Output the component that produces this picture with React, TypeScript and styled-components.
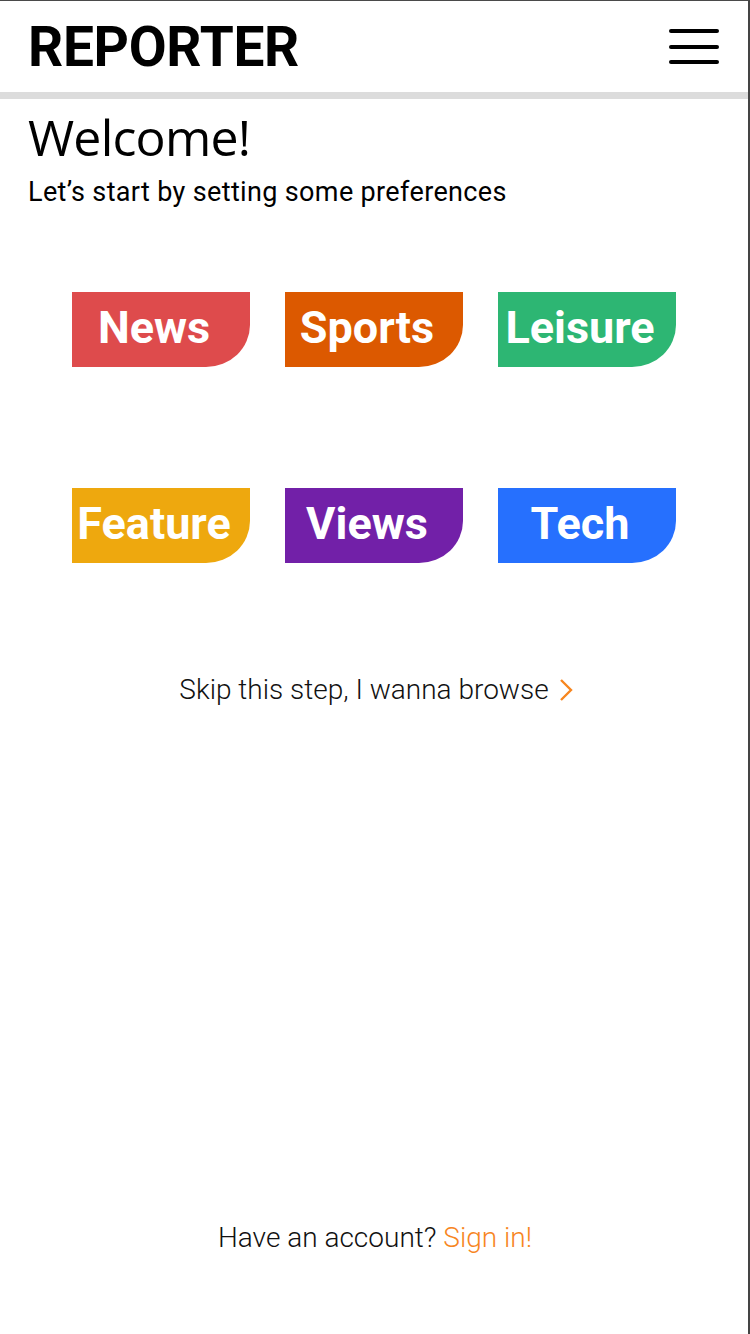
import styled, { createGlobalStyle } from "styled-components";

const GlobalStyle = createGlobalStyle`
  html, body {
    margin: 0;
    padding: 0;
    background: #ffffff;
  }
  * {
    box-sizing: border-box;
  }
`;

const Frame = styled.div`
  width: 750px;
  height: 1334px;
  border-top: 1px solid #4a4a4a;
  border-right: 2px solid #444444;
  display: flex;
  flex-direction: column;
  background: #ffffff;
  overflow: hidden;
`;

const Header = styled.header`
  height: 98px;
  padding: 0 28px 0 28px;
  display: flex;
  align-items: center;
  justify-content: space-between;
  border-bottom: 7px solid #dcdcdc;
`;

const Logo = styled.h1`
  margin: 0;
  font-family: Roboto, "Liberation Sans", sans-serif;
  font-weight: 700;
  font-size: 55px;
  letter-spacing: -0.3px;
  color: #000;
  line-height: 1;
  padding-top: 2px;
`;

const MenuButton = styled.button`
  border: none;
  background: none;
  padding: 0;
  width: 52px;
  margin-right: -1px;
  display: flex;
  flex-direction: column;
  gap: 11.5px;
  cursor: pointer;
`;

const MenuLine = styled.span`
  display: block;
  height: 4px;
  width: 50px;
  border-radius: 2px;
  background: #000;
`;

const Intro = styled.section`
  padding: 8px 28px 0;
`;

const Title = styled.h2`
  margin: 0;
  font-family: "Open Sans", "Noto Sans", sans-serif;
  font-weight: 400;
  font-size: 50px;
  letter-spacing: -0.8px;
  line-height: 60px;
  color: #000;
`;

const Subtitle = styled.p`
  margin: 9px 0 0;
  font-family: Roboto, "Liberation Sans", sans-serif;
  font-size: 27px;
  letter-spacing: 0.35px;
  line-height: 32px;
  color: #000;
`;

const TagGrid = styled.div`
  margin-top: 84px;
  display: grid;
  grid-template-columns: repeat(3, 178px);
  column-gap: 35px;
  row-gap: 121px;
  justify-content: center;
`;

const Tag = styled.button<{ $color: string }>`
  height: 75px;
  border: none;
  background: ${(p) => p.$color};
  border-bottom-right-radius: 44px 42px;
  padding: 0 14px 5px 0;
  display: flex;
  align-items: center;
  justify-content: center;
  font-family: Roboto, "Liberation Sans", sans-serif;
  font-weight: 700;
  font-size: 45px;
  color: #ffffff;
  cursor: pointer;
`;

const SkipLink = styled.a`
  margin-top: 110px;
  align-self: center;
  display: flex;
  align-items: center;
  gap: 10px;
  font-family: Roboto, "Liberation Sans", sans-serif;
  font-weight: 300;
  font-size: 28px;
  color: #111;
  text-decoration: none;
  padding-left: 4px;
`;

const Footer = styled.footer`
  margin-top: auto;
  padding-bottom: 80px;
  text-align: center;
  font-family: Roboto, "Liberation Sans", sans-serif;
  font-weight: 300;
  font-size: 28px;
  color: #111;
  padding-left: 2px;
`;

const Accent = styled.a`
  color: #f7861f;
  text-decoration: none;
`;

const tags = [
  { label: "News", color: "#de4b4c" },
  { label: "Sports", color: "#dc5900" },
  { label: "Leisure", color: "#2db673" },
  { label: "Feature", color: "#eea80e" },
  { label: "Views", color: "#7220a8" },
  { label: "Tech", color: "#2670fe" },
];

function Chevron() {
  return (
    <svg width="14" height="24" viewBox="0 0 14 24" fill="none">
      <path d="M2 2 L12 12 L2 22" stroke="#f7861f" strokeWidth="2.4" />
    </svg>
  );
}

export default function App() {
  return (
    <>
      <GlobalStyle />
      <Frame>
        <Header>
          <Logo>REPORTER</Logo>
          <MenuButton aria-label="Menu">
            <MenuLine />
            <MenuLine />
            <MenuLine />
          </MenuButton>
        </Header>
        <Intro>
          <Title>Welcome!</Title>
          <Subtitle>Let’s start by setting some preferences</Subtitle>
        </Intro>
        <TagGrid>
          {tags.map((t) => (
            <Tag key={t.label} $color={t.color}>
              {t.label}
            </Tag>
          ))}
        </TagGrid>
        <SkipLink href="#">
          Skip this step, I wanna browse <Chevron />
        </SkipLink>
        <Footer>
          Have an account? <Accent href="#">Sign in!</Accent>
        </Footer>
      </Frame>
    </>
  );
}
